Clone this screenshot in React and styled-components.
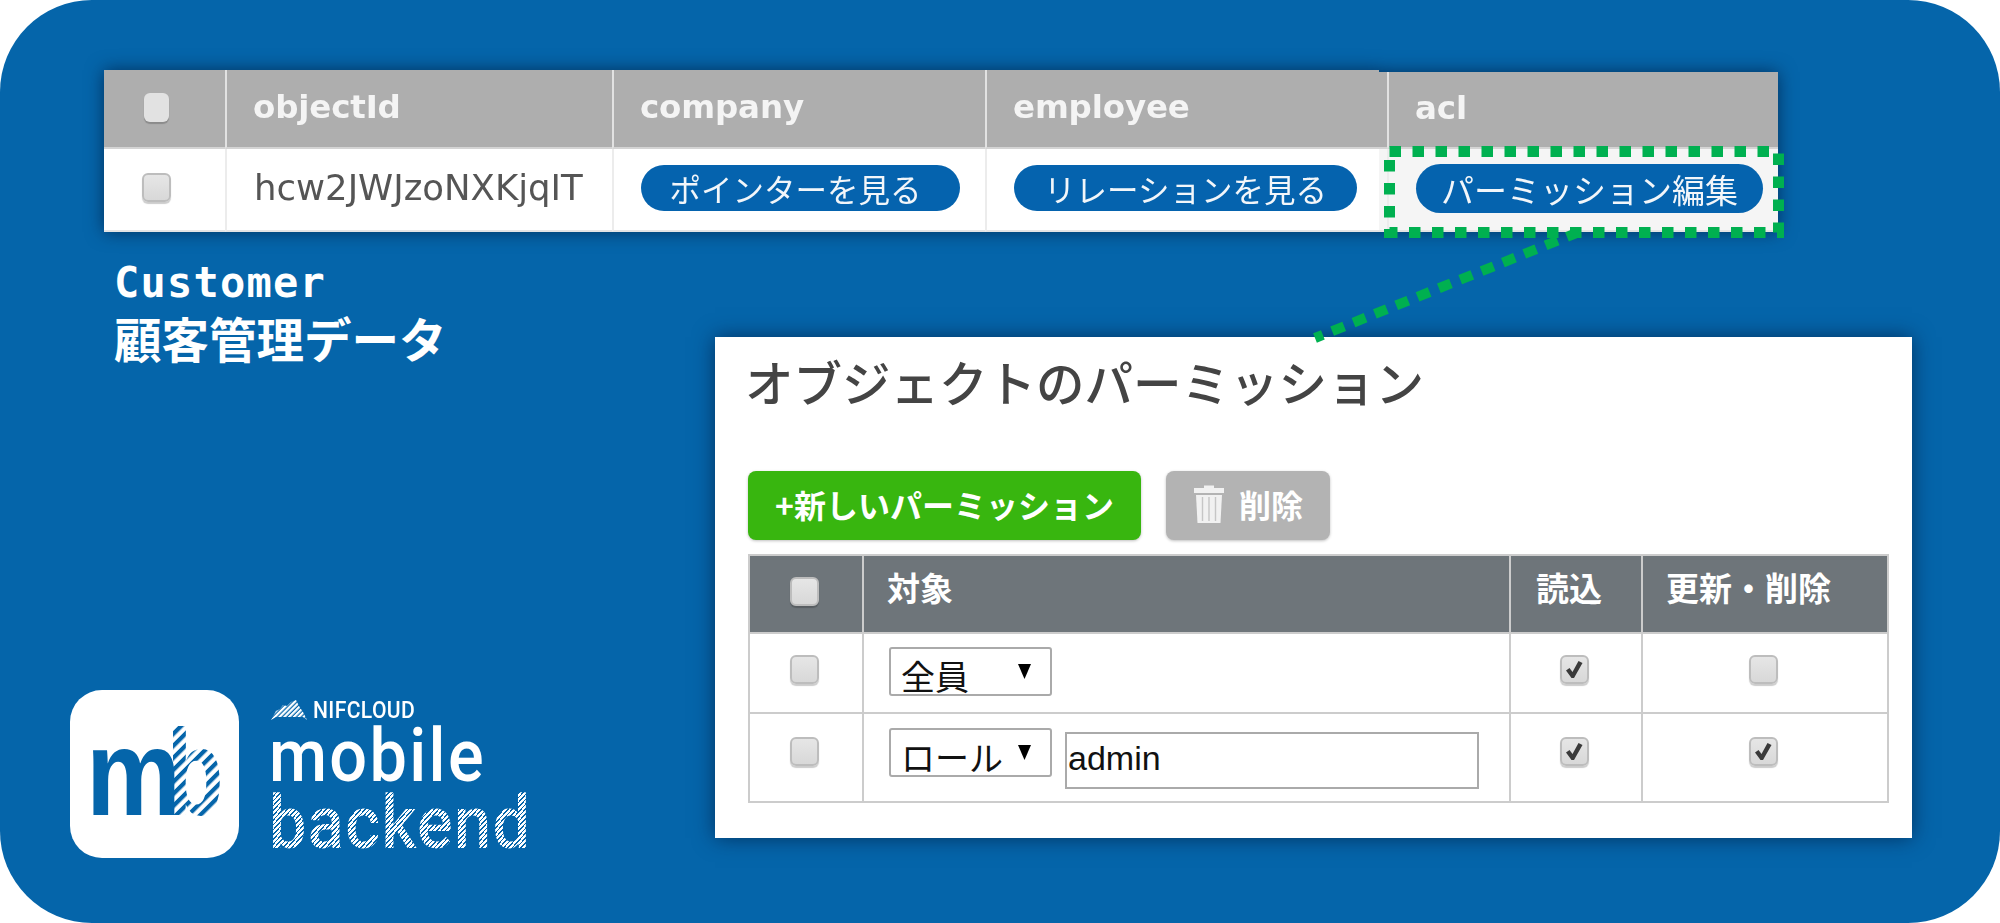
import React from "react";
import styled, { createGlobalStyle } from "styled-components";

const JP = '"Noto Sans CJK JP", sans-serif';
const HEAD = '"DejaVu Sans", "Noto Sans CJK JP", sans-serif';
const BLUE = "#0565aa";
const GREEN = "#00b050";

const GlobalStyle = createGlobalStyle`
  html, body {
    margin: 0;
    background: #fff;
    overflow: hidden;
  }
`;

const Slide = styled.div`
  position: relative;
  width: 2000px;
  height: 923px;
  box-sizing: border-box;
  padding-top: 70px;
  border-radius: 92px;
  background: ${BLUE};
  overflow: hidden;
  display: flex;
  flex-direction: column;
`;

const Overlay = styled.svg`
  position: absolute;
  inset: 0;
  pointer-events: none;
`;

/* customer table */
const TopTable = styled.div`
  display: flex;
  align-items: flex-start;
  margin-left: 104px;
  height: 162px;
  filter: drop-shadow(0 0 9px rgba(0, 25, 60, 0.7));
`;

const Segment = styled.div`
  display: grid;
  grid-template-columns: ${(p) => p.$cols};
  grid-template-rows: ${(p) => p.$rows};
  background: ${(p) => p.$bg};
  margin-top: ${(p) => p.$top || 0}px;
`;

const HeadCell = styled.div`
  display: flex;
  align-items: center;
  justify-content: ${(p) => (p.$center ? "center" : "flex-start")};
  box-sizing: border-box;
  padding: 0 ${(p) => (p.$center ? 16 : 0)}px 3px ${(p) => (p.$center ? 0 : 26)}px;
  background: #aeaeae;
  color: #f4f4f4;
  font: 700 32.5px ${HEAD};
  letter-spacing: -0.15px;
  border-left: ${(p) => (p.$first ? "none" : "2px solid #e2e2e2")};
  border-bottom: 2px solid #d4d4d4;
`;

const BodyCell = styled.div`
  display: flex;
  align-items: center;
  justify-content: ${(p) => (p.$center ? "center" : "flex-start")};
  box-sizing: border-box;
  padding: 0 ${(p) => (p.$center ? 16 : 0)}px 4px ${(p) => (p.$center ? 0 : 27)}px;
  color: #555;
  font: 400 35.5px ${HEAD};
  border-left: ${(p) => (p.$first ? "none" : "2px solid #ececec")};
  border-bottom: 2px solid #e4e4e4;
`;

const Pill = styled.span`
  display: flex;
  align-items: center;
  justify-content: center;
  box-sizing: border-box;
  width: ${(p) => p.$w}px;
  height: ${(p) => p.$h || 46}px;
  margin-top: ${(p) => p.$top || 0}px;
  padding-right: ${(p) => p.$shift || 0}px;
  border-radius: 25px;
  background: #0563ae;
  color: #f2f6fa;
  font: 400 ${(p) => p.$size || 31.5}px ${JP};
  white-space: nowrap;
`;

const Box = styled.span`
  display: block;
  position: relative;
  box-sizing: border-box;
  width: ${(p) => (p.$light ? 25 : 29)}px;
  height: 29px;
  border-radius: 6px;
  background: ${(p) => (p.$light ? "#e2e2e2" : "linear-gradient(#e6e6e6, #d8d8d8)")};
  border: ${(p) => (p.$light ? "none" : "2px solid #bdbdbd")};
  box-shadow: 0 2px 1px rgba(0, 0, 0, 0.2);
`;

const Tick = styled.svg`
  display: block;
  width: 25px;
  height: 25px;
`;

const CheckBox = ({ checked, light }) => (
  <Box $light={light}>
    {checked && (
      <Tick viewBox="0 0 25 25">
        <path d="M4 13.5 L7.5 11 L10.5 15 L16.5 4 L20.5 6 L12 21 L9.5 21 Z" fill="#3a3a3a" />
      </Tick>
    )}
  </Box>
);

/* lower part */
const Lower = styled.div`
  flex: 1;
  display: grid;
  grid-template-columns: 715px 1197px;
`;

const LeftColumn = styled.div`
  display: flex;
  flex-direction: column;
  justify-content: space-between;
  padding-bottom: 65px;
`;

const Caption = styled.div`
  margin: 23px 0 0 114px;
  color: #fff;
`;

const CaptionLatin = styled.div`
  font: 700 42px/56px "DejaVu Sans Mono", monospace;
  letter-spacing: 1.2px;
`;

const CaptionJp = styled.div`
  font: 700 47.5px/54px ${JP};
`;

const Brand = styled.div`
  display: flex;
  margin-left: 70px;
  gap: 30px;
`;

const AppIcon = styled.svg`
  display: block;
  width: 169px;
  height: 168px;
`;

const Wordmark = styled.div`
  display: flex;
  flex-direction: column;
  margin-top: 8px;
`;

const CloudRow = styled.div`
  display: flex;
  align-items: center;
  gap: 6px;
  height: 24px;
  margin-left: 2px;
`;

const Nif = styled.span`
  color: #fff;
  font: 500 24px/24px Roboto, sans-serif;
  letter-spacing: 0.4px;
  transform: scaleX(0.88);
  transform-origin: left center;
`;

const Mobile = styled.div`
  color: #fff;
  font: 500 74px/62px Roboto, sans-serif;
  letter-spacing: 2.6px;
  margin-top: 3px;
  transform: scaleX(0.9);
  transform-origin: left center;
`;

const Backend = styled.div`
  font: 500 74px/62px Roboto, sans-serif;
  letter-spacing: 1.6px;
  margin-top: 5px;
  color: transparent;
  background: repeating-linear-gradient(135deg, #fff 0 2.2px, transparent 2.2px 3.4px);
  -webkit-background-clip: text;
  background-clip: text;
  transform: scaleX(0.9);
  transform-origin: left center;
`;

/* permission panel */
const Panel = styled.div`
  align-self: start;
  margin-top: 105px;
  height: 501px;
  box-sizing: border-box;
  padding: 12px 24px 0 33px;
  background: #fff;
  box-shadow: 0 0 20px rgba(0, 25, 60, 0.65);
`;

const Title = styled.h2`
  margin: 0 0 0 -3px;
  height: 122px;
  color: #444;
  font: 500 48.5px/64px ${JP};
  white-space: nowrap;
`;

const Toolbar = styled.div`
  display: flex;
  gap: 25px;
  height: 83px;
  align-items: flex-start;
`;

const Button = styled.button`
  display: flex;
  align-items: center;
  justify-content: center;
  gap: 14px;
  width: ${(p) => p.$w}px;
  height: 69px;
  padding: 0 0 3px;
  border: none;
  border-radius: 8px;
  background: ${(p) => p.$bg};
  color: #fff;
  font: 700 32px ${JP};
  box-shadow: 0 1px 3px rgba(0, 0, 0, 0.25);
`;

const PermTable = styled.table`
  width: 1141px;
  border-collapse: collapse;
  table-layout: fixed;
`;

const PermHead = styled.th`
  height: 78px;
  box-sizing: border-box;
  padding: 0 0 ${(p) => p.$bottom ?? 14}px ${(p) => p.$left || 0}px;
  border: 2px solid #ccc;
  background: #6e757a;
  color: #fff;
  font: 700 33px ${JP};
  text-align: left;
  white-space: nowrap;
  width: ${(p) => p.$w}px;
`;

const PermCell = styled.td`
  height: ${(p) => p.$h}px;
  box-sizing: border-box;
  padding: ${(p) => p.$pad || 21}px 0 0 ${(p) => (p.$left ? 25 : 0)}px;
  border: 2px solid #ccc;
  vertical-align: top;
`;

const CenterBox = styled.div`
  display: flex;
  justify-content: center;
  padding-right: 4px;
`;

const TargetRow = styled.div`
  display: flex;
  align-items: flex-start;
  gap: 13px;
`;

const SelectBox = styled.div`
  display: flex;
  justify-content: space-between;
  box-sizing: border-box;
  width: 163px;
  height: 49px;
  padding: 0 18px 0 10px;
  border: 2px solid #aaa;
  border-radius: 3px;
  color: #111;
  font: 400 34px/36px ${JP};
`;

const SelectLabel = styled.span`
  display: block;
  margin-top: 9px;
`;

const Arrow = styled.svg`
  width: 15px;
  height: 15px;
  margin-top: 15px;
`;

const NameInput = styled.input`
  width: 414px;
  height: 57px;
  margin-top: 4px;
  box-sizing: border-box;
  padding: 0 1px 5px;
  border: 2px solid #aaa;
  color: #111;
  font: 400 34px "Liberation Sans", Arial, sans-serif;
`;

const Select = ({ label }) => (
  <SelectBox>
    <SelectLabel>{label}</SelectLabel>
    <Arrow viewBox="0 0 15 15">
      <path d="M1 0 H14 L7.5 15 Z" fill="#000" />
    </Arrow>
  </SelectBox>
);

const TrashIcon = () => (
  <svg width="32" height="38" viewBox="0 0 32 38">
    <path d="M11 3 V0.5 H21 V3 H31 V8 H1 V3 Z" fill="#f1f1f1" />
    <path d="M3 10 H29 L27.5 38 H4.5 Z" fill="#f1f1f1" />
    <path d="M9.5 12 V36 M16 12 V36 M22.5 12 V36" stroke="#c6c6c6" strokeWidth="1.4" />
  </svg>
);

const MbMark = () => (
  <AppIcon viewBox="0 0 169 168">
    <defs>
      <pattern id="markStripes" width="8.5" height="8.5" patternUnits="userSpaceOnUse" patternTransform="rotate(-45)">
        <rect width="8.5" height="4.2" fill={BLUE} />
      </pattern>
    </defs>
    <rect width="169" height="168" rx="32" fill="#fff" />
    <text x="16" y="125" textLength="95" lengthAdjust="spacingAndGlyphs" fontFamily="Liberation Sans" fontWeight="700" fontSize="123" fill={BLUE}>
      m
    </text>
    <text x="96.5" y="125" textLength="57" lengthAdjust="spacingAndGlyphs" fontFamily="Liberation Sans" fontWeight="700" fontSize="123" fill="url(#markStripes)">
      b
    </text>
  </AppIcon>
);

const CloudIcon = () => (
  <svg width="36" height="20" viewBox="0 0 36 20">
    <defs>
      <pattern id="cloudStripes" width="3.4" height="3.4" patternUnits="userSpaceOnUse" patternTransform="rotate(-45)">
        <rect width="3.4" height="2.2" fill="#fff" />
      </pattern>
    </defs>
    <path d="M0 20 L5 11 L9 9 L12 5 L16 6 L20 2 L25 0 L28 6 L32 12 L36 20 L32 17 H5 Z" fill="url(#cloudStripes)" />
  </svg>
);

const App = () => (
  <>
    <GlobalStyle />
    <Slide>
      <TopTable>
        <Segment $cols="121px 387px 373px 394px" $rows="79px 83px" $bg="#fff">
          <HeadCell $first $center>
            <CheckBox light />
          </HeadCell>
          <HeadCell>objectId</HeadCell>
          <HeadCell>company</HeadCell>
          <HeadCell>employee</HeadCell>
          <BodyCell $first $center>
            <CheckBox />
          </BodyCell>
          <BodyCell>hcw2JWJzoNXKjqIT</BodyCell>
          <BodyCell>
            <Pill $w={319} $shift={10}>ポインターを見る</Pill>
          </BodyCell>
          <BodyCell>
            <Pill $w={343}>リレーションを見る</Pill>
          </BodyCell>
        </Segment>
        <Segment $cols="8px 391px" $rows="77px 83px" $bg="#f5f5f5" $top={2}>
          <HeadCell $first />
          <HeadCell>acl</HeadCell>
          <BodyCell $first />
          <BodyCell>
            <Pill $w={347} $h={49} $size={33} $top={2}>パーミッション編集</Pill>
          </BodyCell>
        </Segment>
      </TopTable>

      <Lower>
        <LeftColumn>
          <Caption>
            <CaptionLatin>Customer</CaptionLatin>
            <CaptionJp>顧客管理データ</CaptionJp>
          </Caption>
          <Brand>
            <MbMark />
            <Wordmark>
              <CloudRow>
                <CloudIcon />
                <Nif>NIFCLOUD</Nif>
              </CloudRow>
              <Mobile>mobile</Mobile>
              <Backend>backend</Backend>
            </Wordmark>
          </Brand>
        </LeftColumn>

        <Panel>
          <Title>オブジェクトのパーミッション</Title>
          <Toolbar>
            <Button $w={393} $bg="#38b60f">+新しいパーミッション</Button>
            <Button $w={164} $bg="#b3b3b3">
              <TrashIcon />
              削除
            </Button>
          </Toolbar>
          <PermTable>
            <thead>
              <tr>
                <PermHead $w={114} $bottom={6}>
                  <CenterBox>
                    <CheckBox />
                  </CenterBox>
                </PermHead>
                <PermHead $w={647} $left={23}>対象</PermHead>
                <PermHead $w={132} $left={25}>読込</PermHead>
                <PermHead $left={23}>更新・削除</PermHead>
              </tr>
            </thead>
            <tbody>
              <tr>
                <PermCell $h={80}>
                  <CenterBox>
                    <CheckBox />
                  </CenterBox>
                </PermCell>
                <PermCell $h={80} $left $pad={13}>
                  <Select label="全員" />
                </PermCell>
                <PermCell $h={80}>
                  <CenterBox>
                    <CheckBox checked />
                  </CenterBox>
                </PermCell>
                <PermCell $h={80}>
                  <CenterBox>
                    <CheckBox />
                  </CenterBox>
                </PermCell>
              </tr>
              <tr>
                <PermCell $h={89} $pad={23}>
                  <CenterBox>
                    <CheckBox />
                  </CenterBox>
                </PermCell>
                <PermCell $h={89} $left $pad={14}>
                  <TargetRow>
                    <Select label="ロール" />
                    <NameInput defaultValue="admin" readOnly />
                  </TargetRow>
                </PermCell>
                <PermCell $h={89} $pad={23}>
                  <CenterBox>
                    <CheckBox checked />
                  </CenterBox>
                </PermCell>
                <PermCell $h={89} $pad={23}>
                  <CenterBox>
                    <CheckBox checked />
                  </CenterBox>
                </PermCell>
              </tr>
            </tbody>
          </PermTable>
        </Panel>
      </Lower>

      <Overlay width="2000" height="923" viewBox="0 0 2000 923">
        <rect x="1389.5" y="151.5" width="389" height="81" fill="none" stroke={GREEN} strokeWidth="11" strokeDasharray="11.5 11.5" />
        <line x1="1579" y1="232" x2="1315" y2="338" stroke={GREEN} strokeWidth="10" strokeDasharray="13 10" />
      </Overlay>
    </Slide>
  </>
);

export default App;
